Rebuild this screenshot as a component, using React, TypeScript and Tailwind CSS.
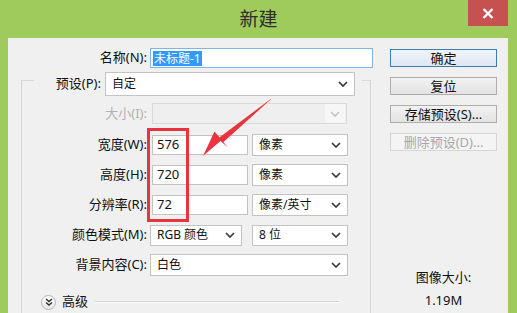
import React from "react";

const Chevron = ({ c = "#3a3a3a" }: { c?: string }) => (
  <svg width="10" height="6" viewBox="0 0 10 6">
    <path d="M1 1 L5 5 L9 1" fill="none" stroke={c} strokeWidth="1.7" />
  </svg>
);

function Select({ className, text, disabled }: { className: string; text?: string; disabled?: boolean }) {
  return (
    <div
      className={
        "flex items-center justify-between border " +
        (disabled ? "border-[#d9d9d9] bg-[#efefef] " : "border-[#c3c3c3] bg-white ") +
        className
      }
    >
      <span className="pl-[6px] text-[12px] text-[#111] whitespace-nowrap">{text}</span>
      <span className={"flex items-center justify-center h-full w-[20px] mr-[1px] " + (disabled ? "bg-[#f6f6f6]" : "")}>
        <Chevron c={disabled ? "#c4c4c4" : "#3a3a3a"} />
      </span>
    </div>
  );
}

function Input({ text }: { text: string }) {
  return (
    <div className="ml-[5px] w-[96px] h-[20px] border border-[#c3c3c3] bg-white flex items-center pl-[4px] text-[13px] text-[#111]">
      {text}
    </div>
  );
}

function Btn({ text, kind }: { text: string; kind?: "default" | "disabled" }) {
  const cls =
    kind === "default"
      ? "border-[#3c7fb1] bg-linear-to-b from-[#eef4fa] to-[#dde8f3] text-[#111]"
      : kind === "disabled"
      ? "border-[#d5d5d5] bg-[#f4f4f4] text-[#a8a8a8]"
      : "border-[#adadad] bg-linear-to-b from-[#f2f2f2] to-[#e3e3e3] text-[#111]";
  return (
    <div className={"w-[107px] h-[18px] border flex items-center justify-center text-[13px] leading-none " + cls}>
      {text}
    </div>
  );
}

function Row({ label, children, className, disabled }: { label: string; children: React.ReactNode; className: string; disabled?: boolean }) {
  return (
    <div className={"flex items-center " + className}>
      <div className={"w-[125px] text-right text-[13px] whitespace-nowrap " + (disabled ? "text-[#b0b0b0]" : "text-[#111]")}>
        {label}
      </div>
      {children}
    </div>
  );
}

export default function App() {
  return (
    <div className="relative w-[517px] h-[313px] overflow-hidden bg-[#9ecb5b] flex flex-col font-['Noto_Sans','Noto_Sans_CJK_SC',sans-serif]">
      <div className="h-[38px] shrink-0 flex items-center justify-center relative">
        <span className="text-[19px] text-[#2e2e2e] leading-none">新建</span>
        <div className="absolute top-0 right-[9px] w-[40px] h-[26px] bg-[#c75050] flex items-center justify-center">
          <svg width="12" height="11" viewBox="0 0 12 11">
            <path d="M1.5 1 L10.5 10 M10.5 1 L1.5 10" stroke="white" strokeWidth="2.4" />
          </svg>
        </div>
      </div>

      <div className="flex-1 ml-[8px] mr-[9px] bg-[#f0f0f0] flex">
        {/* left column */}
        <div className="w-[372px] flex flex-col">
          <div className="mt-[10px] h-[20px] flex items-center">
            <div className="w-[139px] text-right text-[13px] text-[#111]">名称(N):</div>
            <div className="ml-[3px] w-[223px] h-[20px] border border-[#84b4e6] bg-white flex items-center pl-[2px]">
              <span className="bg-[#3399ff] text-white text-[12px] leading-[15px] px-[1px]">未标题-1</span>
            </div>
          </div>

          <div className="mt-[12px] ml-[13px] w-[350px] flex-1 border-l border-t border-r border-[#d6d6d6] flex flex-col">
            <div className="-mt-[9px] ml-[12px] w-[328px] h-[24px] bg-[#f0f0f0] flex items-center">
              <div className="w-[67px] text-right text-[13px] text-[#111]">预设(P):</div>
              <Select className="ml-[4px] w-[250px] h-[24px]" text="自定" />
            </div>

            <Row label="大小(I):" className="mt-[7px] h-[21px]" disabled>
              <Select className="ml-[5px] w-[195px] h-[21px]" disabled />
            </Row>
            <Row label="宽度(W):" className="mt-[10px] h-[22px]">
              <Input text="576" />
              <Select className="ml-[4px] w-[96px] h-[22px]" text="像素" />
            </Row>
            <Row label="高度(H):" className="mt-[8px] h-[22px]">
              <Input text="720" />
              <Select className="ml-[4px] w-[96px] h-[22px]" text="像素" />
            </Row>
            <Row label="分辨率(R):" className="mt-[8px] h-[22px]">
              <Input text="72" />
              <Select className="ml-[4px] w-[96px] h-[22px]" text="像素/英寸" />
            </Row>
            <Row label="颜色模式(M):" className="mt-[8px] h-[22px]">
              <Select className="ml-[3px] w-[92px] h-[21px]" text="RGB 颜色" />
              <Select className="ml-[10px] w-[96px] h-[21px]" text="8 位" />
            </Row>
            <Row label="背景内容(C):" className="mt-[8px] h-[22px]">
              <Select className="ml-[3px] w-[198px] h-[22px]" text="白色" />
            </Row>

            <div className="mt-[18px] h-[16px] flex items-center">
              <div className="ml-[19px] w-[15px] h-[15px] rounded-full border border-[#b5b5b5] bg-linear-to-b from-white to-[#e6e6e6] flex items-center justify-center">
                <svg width="8" height="8" viewBox="0 0 8 8">
                  <path d="M1 1 L4 3.5 L7 1 M1 4.5 L4 7 L7 4.5" fill="none" stroke="#333" strokeWidth="1.4" />
                </svg>
              </div>
              <span className="ml-[6px] text-[13px] text-[#111]">高级</span>
              <div className="ml-[7px] w-[244px] h-[2px] border-t border-[#d3d3d3] border-b border-b-white" />
            </div>
          </div>
        </div>

        {/* right column */}
        <div className="flex-1 flex flex-col pl-[10px] pt-[11px]">
          <div className="flex flex-col gap-[10px]">
            <Btn text="确定" kind="default" />
            <Btn text="复位" />
            <Btn text="存储预设(S)..." />
            <Btn text="删除预设(D)..." kind="disabled" />
          </div>
          <div className="w-[107px] mt-[117px] text-center text-[13px] leading-[18px] text-[#111]">图像大小:</div>
          <div className="w-[107px] mt-[5px] text-center text-[13px] leading-[18px] text-[#111]">1.19M</div>
        </div>
      </div>

      {/* annotations */}
      <div className="absolute left-[147px] top-[128px] w-[42px] h-[94px] border-[3px] border-[#e8343c]" />
      <svg className="absolute left-0 top-0" width="517" height="313" viewBox="0 0 517 313">
        <polygon points="271.4,98.5 270.6,99.5 223,142.5 219,137.7" fill="#e8343c" />
        <polygon points="203,156 214.5,131.5 228,147.5 220.5,141" fill="#e8343c" />
      </svg>
    </div>
  );
}
